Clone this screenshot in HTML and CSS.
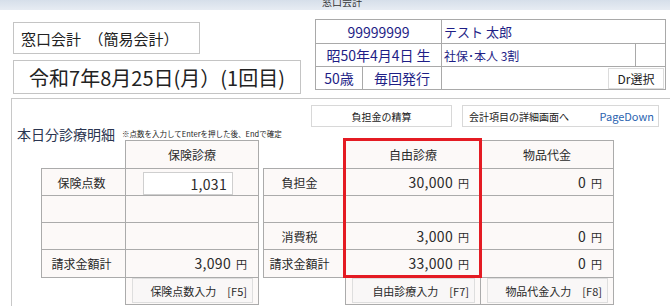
FILE: index.html
```html
<!DOCTYPE html>
<html lang="ja">
<head>
<meta charset="utf-8">
<title>窓口会計</title>
<link rel="stylesheet" href="styles.css">
</head>
<body>
<div class="titlebar"><span class="titlebar-text">窓口会計</span></div>
<div class="top">
  <div class="left">
    <div class="box box-mode">窓口会計　（簡易会計）</div>
    <div class="box box-date">令和7年8月25日(月）(1回目)</div>
  </div>
  <div class="patient">
    <div class="pc c-id">99999999</div>
    <div class="pc c-name">テスト 太郎</div>
    <div class="pc c-birth">昭50年4月4日 生</div>
    <div class="pc c-ins">社保･本人 3割</div>
    <div class="pc c-blank"></div>
    <div class="pc c-age">50歳</div>
    <div class="pc c-issue">毎回発行</div>
    <div class="pc c-dr"><div class="dr-btn">Dr選択</div></div>
  </div>
</div>
<div class="panel">
  <div class="actions">
    <div class="act act-settle">負担金の精算</div>
    <div class="act act-detail"><span>会計項目の詳細画面へ</span><span class="key">PageDown</span></div>
  </div>
  <div class="heading">
    <span class="heading-title">本日分診療明細</span>
    <span class="heading-note">※点数を入力してEnterを押した後、Endで確定</span>
  </div>
  <div class="ledger">
    <div class="cell head col-v1 row-h">保険診療</div>
    <div class="cell head col-v2 row-h">自由診療</div>
    <div class="cell head col-v3 row-h">物品代金</div>

    <div class="cell label1 col-l1 row-1">保険点数</div>
    <div class="cell entry-cell col-v1 row-1"><div class="entry">1,031</div></div>
    <div class="cell label2 col-l2 row-1">負担金</div>
    <div class="cell value col-v2 row-1"><span class="amt">30,000</span><span class="yen">円</span></div>
    <div class="cell value col-v3 row-1"><span class="amt">0</span><span class="yen">円</span></div>

    <div class="cell label1 col-l1 row-2"></div>
    <div class="cell value col-v1 row-2"></div>
    <div class="cell label2 col-l2 row-2"></div>
    <div class="cell value col-v2 row-2"></div>
    <div class="cell value col-v3 row-2"></div>

    <div class="cell label1 col-l1 row-3"></div>
    <div class="cell value col-v1 row-3"></div>
    <div class="cell label2 col-l2 row-3">消費税</div>
    <div class="cell value col-v2 row-3"><span class="amt">3,000</span><span class="yen">円</span></div>
    <div class="cell value col-v3 row-3"><span class="amt">0</span><span class="yen">円</span></div>

    <div class="cell label1 col-l1 row-4">請求金額計</div>
    <div class="cell value col-v1 row-4"><span class="amt">3,090</span><span class="yen">円</span></div>
    <div class="cell label2 col-l2 row-4">請求金額計</div>
    <div class="cell value col-v2 row-4"><span class="amt">33,000</span><span class="yen">円</span></div>
    <div class="cell value col-v3 row-4"><span class="amt">0</span><span class="yen">円</span></div>

    <div class="cell btn-cell col-v1 row-b"><div class="fbtn">保険点数入力　[F5]</div></div>
    <div class="cell btn-cell col-v2 row-b"><div class="fbtn">自由診療入力　[F7]</div></div>
    <div class="cell btn-cell col-v3 row-b"><div class="fbtn">物品代金入力　[F8]</div></div>

    <div class="focus"></div>
  </div>
</div>
</body>
</html>
```

FILE: styles.css
```css
* { box-sizing: border-box; }

html, body {
  margin: 0;
  padding: 0;
  width: 670px;
  height: 306px;
  overflow: hidden;
  background: #ffffff;
  font-family: "Noto Sans CJK JP", "Noto Sans", sans-serif;
  color: #333333;
}

.titlebar {
  height: 10px;
  overflow: hidden;
  background: linear-gradient(#d6dfea, #e7ecf3);
  padding-left: 322px;
}

.titlebar-text {
  display: block;
  font-size: 10px;
  line-height: 10px;
  margin-top: -3px;
  color: #333;
}

.top {
  display: flex;
  height: 88px;
}

.left {
  width: 315px;
  padding: 12px 0 0 13px;
  display: flex;
  flex-direction: column;
  gap: 6px;
}

.box {
  border: 1px solid #c4c4c4;
  display: flex;
  align-items: center;
  color: #222;
}

.box-mode {
  width: 187px;
  height: 32px;
  padding-left: 7px;
  font-size: 15px;
}

.box-date {
  width: 288px;
  height: 34px;
  justify-content: center;
  font-size: 20px;
}

.patient {
  margin-top: 9px;
  display: grid;
  grid-template-columns: 47px 79px 194px 30px;
  grid-template-rows: 24px 23px 23px;
  align-self: flex-start;
  color: #1e1e86;
}

.pc {
  border: 1px solid #a9a9a9;
  margin: 0 -1px -1px 0;
  display: flex;
  align-items: center;
  background: #fff;
  font-size: 14px;
}

.c-id { grid-column: 1 / 3; justify-content: center; }
.c-name { grid-column: 3 / 5; padding-left: 2px; font-size: 13px; }
.c-birth { grid-column: 1 / 3; justify-content: center; }
.c-ins { grid-column: 3; padding-left: 2px; font-size: 12px; }
.c-blank { grid-column: 4; }
.c-age { grid-column: 1; justify-content: center; }
.c-issue { grid-column: 2; justify-content: center; }
.c-dr { grid-column: 3 / 5; justify-content: flex-end; padding-right: 1px; }

.dr-btn {
  width: 56px;
  height: 21px;
  border: 1px solid #dcdcdc;
  background: #fff;
  font-size: 12px;
  color: #222;
  display: flex;
  align-items: center;
  justify-content: center;
}

.panel {
  margin-left: 11px;
  width: 720px;
  height: 220px;
  border-top: 1px solid #c8c8c8;
  border-left: 1px solid #c8c8c8;
}

.actions {
  display: flex;
  gap: 10px;
  padding: 6px 0 0 299px;
}

.act {
  height: 22px;
  border: 1px solid #d8d8d8;
  background: #fff;
  font-size: 10px;
  color: #222;
  display: flex;
  align-items: center;
}

.act-settle {
  width: 141px;
  justify-content: center;
}

.act-detail {
  width: 197px;
  padding: 0 4px 0 6px;
  justify-content: space-between;
}

.key {
  color: #2a63b0;
  font-size: 11px;
}

.heading {
  height: 13px;
  display: flex;
  align-items: flex-start;
  padding-left: 5px;
}

.heading-title {
  font-size: 14px;
  line-height: 14px;
  color: #2b3550;
  white-space: nowrap;
}

.heading-note {
  font-size: 7.5px;
  line-height: 8px;
  margin: 3px 0 0 7px;
  white-space: nowrap;
  color: #222;
}

.ledger {
  display: grid;
  grid-template-columns: 29px 84px 133px 5px 82px 135px 133px;
  grid-template-rows: 28px 27px 27px 27px 28px 27px;
}

.col-l1 { grid-column: 2; }
.col-v1 { grid-column: 3; }
.col-l2 { grid-column: 5; }
.col-v2 { grid-column: 6; }
.col-v3 { grid-column: 7; }

.row-h { grid-row: 1; }
.row-1 { grid-row: 2; }
.row-2 { grid-row: 3; }
.row-3 { grid-row: 4; }
.row-4 { grid-row: 5; }
.row-b { grid-row: 6; }

.cell {
  border: 1px solid #ababab;
  margin: 0 -1px -1px 0;
  background: #fcf9f8;
  display: flex;
  align-items: center;
  font-size: 12px;
  color: #2a2a2a;
}

.head {
  justify-content: center;
}

.label1 {
  justify-content: center;
  padding-right: 4px;
}

.label2 {
  justify-content: center;
  padding-right: 10px;
}

.value {
  justify-content: flex-end;
  align-items: baseline;
  padding: 5px 11px 0 0;
}

.amt {
  font-size: 14px;
  line-height: 16px;
  letter-spacing: 0.3px;
}

.yen {
  font-size: 11px;
  margin-left: 5px;
}

.entry-cell {
  align-items: flex-start;
  padding-left: 17px;
}

.entry {
  margin-top: 3px;
  width: 90px;
  height: 23px;
  border: 1px solid #cfcfcf;
  background: #fff;
  font-size: 14px;
  letter-spacing: 0.3px;
  display: flex;
  align-items: center;
  justify-content: flex-end;
  padding-right: 5px;
}

.btn-cell {
  align-items: stretch;
  padding: 0 5px 1px 6px;
}

.fbtn {
  flex: 1;
  border: 1px solid #dedede;
  background: #f9f7f7;
  font-size: 11px;
  color: #2a2a2a;
  display: flex;
  align-items: center;
  justify-content: flex-end;
  padding-right: 5px;
}

.focus {
  grid-column: 6;
  grid-row: 1 / 6;
  border: 3px solid #e41b23;
  margin: -2px -2px -1px -2px;
  z-index: 2;
  pointer-events: none;
}
```
